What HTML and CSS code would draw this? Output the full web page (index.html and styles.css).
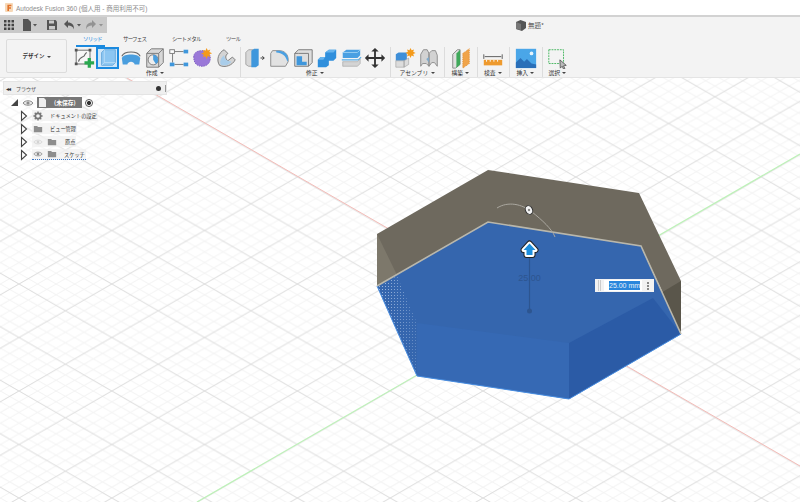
FILE: index.html
```html
<!DOCTYPE html>
<html lang="ja">
<head>
<meta charset="utf-8">
<title>Autodesk Fusion 360</title>
<link rel="stylesheet" href="styles.css">
</head>
<body>
<svg class="defs" width="0" height="0" aria-hidden="true">
  <symbol id="eye" viewBox="0 0 12 12"><path d="M1 6c2-3 8-3 10 0-2 3-8 3-10 0z" fill="#e8e8e8" stroke="#8a8a8a"/><circle cx="6" cy="6" r="1.6" fill="#8a8a8a"/></symbol>
  <symbol id="folder" viewBox="0 0 12 12"><path d="M1 2.5h4l1 1.200h5v6.300H1z" fill="#8d8d8d"/></symbol>
  <symbol id="tri" viewBox="0 0 8 12"><path d="M1.500 1.500L6.500 6l-5 4.500z" fill="#fff" stroke="#444" stroke-width="1.100"/></symbol>
  <symbol id="arrow" viewBox="0 0 20 24"><path d="M10 4L16 11H13V17H7V11H4z"/></symbol>
</svg>

<header class="titlebar">
  <svg class="app-icon" width="8" height="9" viewBox="0 0 10 11"><rect width="10" height="11" rx="1" fill="#f7d9b8"/><path d="M3 2h5v1.800H5v1.400h2.500V7H5v3H3z" fill="#e2722a"/></svg>
  <span class="app-name">Autodesk Fusion 360 (個人用 - 商用利用不可)</span>
</header>

<section class="toolbar">
  <div class="top-row">
    <div class="qat">
      <svg width="12" height="12" viewBox="0 0 12 12"><path d="M1 1h2.500v2.500H1zM4.800 1h2.500v2.500H4.800zM8.500 1H11v2.500H8.500zM1 4.800h2.500v2.500H1zM4.800 4.800h2.500v2.500H4.800zM8.500 4.800H11v2.500H8.500zM1 8.500h2.500V11H1zM4.800 8.500h2.500V11H4.800zM8.500 8.500H11V11H8.500z" fill="#444"/></svg>
      <svg class="qat-file" width="16" height="12" viewBox="0 0 16 12"><path d="M1 0h5l3 3v9H1z" fill="#555"/><path d="M11 5h4l-2 2.500z" fill="#555"/></svg>
      <svg class="qat-save" width="12" height="12" viewBox="0 0 12 12"><path d="M1 1h8.500L11 2.500V11H1z" fill="#555"/><path d="M3 1.500h5v3H3zM3 7h6v3.500H3z" fill="#c9c9c9"/></svg>
      <svg class="qat-undo" width="20" height="12" viewBox="0 0 20 12"><path d="M1 5l4-4v2.500c4 0 6 2 6 7-1-3-3-4-6-4V9z" fill="#555"/><path d="M14 5h4l-2 2.500z" fill="#555"/></svg>
      <svg class="qat-redo" width="20" height="12" viewBox="0 0 20 12"><path d="M11 5L7 1v2.500c-4 0-6 2-6 7 1-3 3-4 6-4V9z" fill="#939393"/><path d="M14 5h4l-2 2.500z" fill="#939393"/></svg>
    </div>
    <div class="doc-title">
      <svg width="11" height="11" viewBox="0 0 11 11"><path d="M5.500 0L11 2v6l-4 3-6-2V2z" fill="#555"/><path d="M1 2l5 2v6L1 9z" fill="#777"/></svg>
      <span>無題*</span>
    </div>
  </div>

  <div class="ribbon">
    <button class="design-btn">デザイン <i class="caret"></i></button>
    <div class="tools">
      <div class="tabs">
        <span class="tab tab-active">ソリッド</span>
        <span class="tab tab-surface">サーフェス</span>
        <span class="tab tab-sheet">シート メタル</span>
        <span class="tab tab-tool">ツール</span>
      </div>
      <div class="groups">
        <div class="group group-create">
          <div class="icons">
            <span class="tool"><svg width="24" height="24" viewBox="0 0 24 24"><rect x="3.500" y="3.500" width="15" height="15" fill="#f7f7f7" stroke="#666"/><path d="M2 2h3v3H2zM17 2h3v3h-3zM2 17h3v3H2z" fill="#555"/><path d="M6 16c1-5 5-5 6-6 1-1 1-3 3-4" fill="none" stroke="#666" stroke-width="1.200"/><path d="M16 12h3.500v3.500H23V19h-3.500v3.500H16V19h-3.500v-3.500H16z" fill="#2aa84f"/></svg></span>
            <span class="tool tool-on"><svg width="24" height="24" viewBox="0 0 24 24"><path d="M5 6l3-3h12v14l-3 3H5z" fill="#8cc6f2" stroke="#5aa0d8" stroke-width=".8"/><path d="M8 3v14h12M8 17l-3 3" fill="none" stroke="#c4e2f8" stroke-width=".8"/></svg></span>
            <span class="tool"><svg width="24" height="24" viewBox="0 0 24 24"><path d="M2 12c2-5 18-5 20 0l-1 7h-5c-1-4-7-4-8 0H3z" fill="#4a9ede"/><path d="M2 10c3-6 17-6 20 0" fill="none" stroke="#666" stroke-width="1.200"/></svg></span>
            <span class="tool"><svg width="24" height="24" viewBox="0 0 24 24"><path d="M3 7l5-5h13v15l-5 5H3z" fill="#d8d8d8" stroke="#777"/><path d="M3 7h13v15M16 7l5-5" fill="none" stroke="#777"/><circle cx="10" cy="14" r="5.500" fill="#eee" stroke="#777"/><path d="M10 14V8.500a5.500 5.500 0 0 1 3 10z" fill="#4a9ede"/></svg></span>
            <span class="tool"><svg width="24" height="24" viewBox="0 0 24 24"><path d="M7 5h10M7 19h10M5 7v10" stroke="#777" fill="none"/><rect x="2" y="3" width="5" height="4" fill="#fff" stroke="#777"/><rect x="17" y="3" width="5" height="4" fill="#3f97dc"/><rect x="2" y="17" width="5" height="4" fill="#3f97dc"/><rect x="17" y="17" width="5" height="4" fill="#3f97dc"/></svg></span>
            <span class="tool"><svg width="24" height="24" viewBox="0 0 24 24"><path d="M3 11c0-5 4-7 9-7 5 0 9 3 9 8 0 6-4 9-9 9-6 0-9-4-9-10z" fill="#9a78d8" stroke="#7a5cc0" stroke-dasharray="1.500 1"/><path d="M17 1l1.300 2.800 2.700-1-1 2.800 3 1.200-3 1.200 1 2.800-2.700-1L17 13l-1.300-2.800-2.700 1 1-2.800-3-1.200 3-1.200-1-2.800 2.700 1z" fill="#f49a1a"/></svg></span>
            <span class="tool"><svg width="24" height="24" viewBox="0 0 24 24"><path d="M5 20C1 14 4 6 10 3l4 4c-3 2-3 6 0 8l5-4 3 3c-3 6-11 9-17 6z" fill="#d4d4d4" stroke="#777"/><path d="M6 19c4 2 9 1 12-3l-4-1c-3-1-4-4-4-6-3 2-5 6-4 10z" fill="#a9cdea"/></svg></span>
          </div>
          <span class="group-label">作成 <i class="caret"></i></span>
        </div>
        <div class="group">
          <div class="icons">
            <span class="tool"><svg width="24" height="24" viewBox="0 0 24 24"><path d="M2 6l3-3h5v18H5l-3-2z" fill="#d8d8d8" stroke="#888" stroke-width=".7"/><path d="M8 4l3-2h5v18l-3 2H8z" fill="#3f97dc"/><path d="M18 12h4m-2-2l2 2-2 2" stroke="#333" fill="none"/></svg></span>
            <span class="tool"><svg width="24" height="24" viewBox="0 0 24 24"><path d="M3 21V7l2-3h7c6 0 10 4 10 10v2l-3 5z" fill="#e2e2e2" stroke="#888"/><path d="M9 4h3c6 0 10 4 10 10l-1 2c-1-6-6-10-12-10z" fill="#4aa0e2"/></svg></span>
            <span class="tool"><svg width="24" height="24" viewBox="0 0 24 24"><path d="M3 7l4-4h15v14l-4 4H3z" fill="#dedede" stroke="#777"/><path d="M7 7h11v14M3 7h4" fill="none" stroke="#777"/><path d="M5 10h6v6h5v4H5z" fill="#3f97dc"/></svg></span>
            <span class="tool"><svg width="24" height="24" viewBox="0 0 24 24"><path d="M2 14l3-3h5V6l4-3h8v9l-3 3h-5v5l-3 2H2z" fill="#2f8fdc"/><path d="M10 6l4-3h8l-3 3zM2 14l3-3h5l-2 3z" fill="#66b4ee"/></svg></span>
            <span class="tool"><svg width="24" height="24" viewBox="0 0 24 24"><path d="M3 6l4-3h15v6l-3 3H3z" fill="#4aa0e2"/><path d="M3 6h16l3-3" fill="none" stroke="#9bd0f4"/><path d="M2 14h18l3-3" fill="none" stroke="#5aaee8" stroke-width="1.200"/><path d="M3 16h16l3-3v5l-3 3H3z" fill="#d4d4d4" stroke="#999" stroke-width=".6"/></svg></span>
            <span class="tool"><svg width="24" height="24" viewBox="0 0 24 24"><path d="M12 1l4 4h-3v6h6V8l4 4-4 4v-3h-6v6h3l-4 4-4-4h3v-6H5v3l-4-4 4-4v3h6V5H8z" fill="#333"/></svg></span>
          </div>
          <span class="group-label">修正 <i class="caret"></i></span>
        </div>
        <div class="group">
          <div class="icons">
            <span class="tool"><svg width="24" height="24" viewBox="0 0 24 24"><path d="M2 8l3-2h9v9H2z" fill="#3f8fd8"/><path d="M2 15h9v7H2zM11 15l5-3v7l-5 3z" fill="#dcdcdc" stroke="#999" stroke-width=".6"/><path d="M18 1l1.200 2.600 2.600-.9-.9 2.600 2.600 1.200-2.600 1.200.9 2.600-2.600-.9L18 12l-1.200-2.600-2.600.9.900-2.600L12.500 6.500l2.600-1.200-.9-2.600 2.600.9z" fill="#f49a1a"/></svg></span>
            <span class="tool"><svg width="24" height="24" viewBox="0 0 24 24"><path d="M3 8l3-5h4l2 4v14l-3-3H5l-2 3zM12 7l3-3h4l2 5v12l-3-4h-3l-3 4z" fill="#d2d2d2" stroke="#8a8a8a"/><path d="M9 13l3-2v6z" fill="#7fa8c8"/></svg></span>
          </div>
          <span class="group-label">アセンブリ <i class="caret"></i></span>
        </div>
        <div class="group group-wide">
          <div class="icons">
            <span class="tool"><svg width="24" height="24" viewBox="0 0 24 24"><path d="M3 8l5-5h3v16l-5 4H3z" fill="#e0e0e0" stroke="#888"/><path d="M7 7l4-4v16l-4 4z" fill="#3fa85a"/><path d="M14 7l7-5v16l-7 5z" fill="#f0a44a" stroke="#e08a2c" stroke-dasharray="1 1"/></svg></span>
          </div>
          <span class="group-label">構築 <i class="caret"></i></span>
        </div>
        <div class="group group-narrow">
          <div class="icons">
            <span class="tool"><svg width="24" height="24" viewBox="0 0 24 24"><path d="M2 8v5M22 8v5M3 10.500h18" stroke="#555" fill="none"/><rect x="2" y="14" width="20" height="6" fill="#ee9a2e"/><path d="M5 14v2M9 14v2M13 14v2M17 14v2" stroke="#fff"/></svg></span>
          </div>
          <span class="group-label">検査 <i class="caret"></i></span>
        </div>
        <div class="group group-wide">
          <div class="icons">
            <span class="tool"><svg width="24" height="24" viewBox="0 0 24 24"><rect x="1" y="2" width="22" height="21" fill="#4aa6e8"/><circle cx="18" cy="7" r="2" fill="#e6f4fc"/><path d="M1 23v-6l5-5 4 4 3-3 5 5 5 1v4z" fill="#2a6fb8"/></svg></span>
          </div>
          <span class="group-label">挿入 <i class="caret"></i></span>
        </div>
        <div class="group group-last">
          <div class="icons">
            <span class="tool"><svg width="24" height="24" viewBox="0 0 24 24"><rect x="2" y="3" width="16" height="15" fill="none" stroke="#3fb45a" stroke-dasharray="2 1"/><path d="M14 14l7 6-3 .5 1.500 3-1.500.5-1.500-3-2 2z" fill="#bbb" stroke="#444" stroke-width=".8"/></svg></span>
          </div>
          <span class="group-label">選択 <i class="caret"></i></span>
        </div>
      </div>
    </div>
  </div>
</section>

<main class="viewport">
  <svg class="scene" viewBox="0 78 800 424" width="800" height="424">
    <defs>
      <pattern id="grid" patternUnits="userSpaceOnUse" x="19" y="391" width="92.8" height="53.5">
        <path d="M0 10.700L92.800 64.200M0 21.400L92.800 74.900M0 32.100L92.800 85.600M0 42.800L92.800 96.300M0 -42.800L92.800 10.700M0 -32.100L92.800 21.400M0 -21.400L92.800 32.100M0 -10.700L92.800 42.800M0 10.700L92.800 -42.800M0 21.400L92.800 -32.100M0 32.100L92.800 -21.400M0 42.800L92.800 -10.700M0 64.200L92.800 10.700M0 74.900L92.800 21.400M0 85.600L92.800 32.100M0 96.300L92.800 42.800" stroke="#f4f4f4" fill="none"/>
        <path d="M0 0L92.800 53.500M0 53.500L92.800 0" stroke="#dcdcdc" fill="none"/>
      </pattern>
      <pattern id="dots" patternUnits="userSpaceOnUse" width="3" height="3">
        <rect x="1" y="1" width="1" height="1" fill="#a9c1e4"/>
      </pattern>
      <linearGradient id="dotfade" x1="0" x2="1" y1="0" y2="0">
        <stop offset="0" stop-color="#fff"/>
        <stop offset="1" stop-color="#555"/>
      </linearGradient>
      <mask id="dotmask" maskUnits="userSpaceOnUse" x="370" y="270" width="60" height="110">
        <rect x="377" y="270" width="40" height="110" fill="url(#dotfade)"/>
      </mask>
    </defs>
    <rect x="0" y="78" width="800" height="424" fill="url(#grid)"/>
    <path d="M127 78L800 466" stroke="#f4bcb8" fill="none"/>
    <path d="M197 502L800 154" stroke="#bdf2b8" stroke-width="1.200" fill="none"/>

    <path d="M377 234L488 170L639 193L681 281V332L641 246L488 222L377 286z" fill="#6e695e"/>
    <path d="M377 234L397 275L377 286z" fill="#7d786b"/>
    <path d="M681 281V332L654 297z" fill="#5a564b"/>

    <path d="M377 286L488 222L641 246L681 334L569 399L417 376z" fill="#3566ae"/>
    <path d="M417 323L569 343V399L417 376z" fill="#3669b4"/>
    <path d="M569 343L653 298L681 334L569 399z" fill="#2b5ba6"/>
    <path d="M378 287L397 276L417 323V376z" fill="url(#dots)" mask="url(#dotmask)"/>
    <path d="M417 376L569 399L681 334" stroke="#4a8ee0" fill="none"/>
    <path d="M377 286L417 376" stroke="#4a8ee0" fill="none"/>
    <path d="M377 286L488 222L641 246L681 334" stroke="#b9b7ac" stroke-width="1.600" fill="none"/>

    <path d="M497 208C508 201 522 204 532 212S552 229 555 237" stroke="#aaa79f" fill="none"/>
    <ellipse cx="529" cy="210" rx="3.500" ry="4.500" fill="#f4f4f4" stroke="#333" transform="rotate(-25 529 210)"/>
    <circle cx="529" cy="210" r="1.200" fill="#888"/>

    <path d="M529.500 258V311" stroke="#2d5590" stroke-width="1.200"/>
    <circle cx="529.500" cy="311" r="2.500" fill="#2d5590"/>
    <text class="dim-text" x="529.500" y="281">25.00</text>
    <path d="M529.500 243.500L535.500 250H532.500V255H526.500V250H523.500z" fill="#222" stroke="#222" stroke-width="6" stroke-linejoin="round"/>
    <path d="M529.500 243.500L535.500 250H532.500V255H526.500V250H523.500z" fill="#fff" stroke="#fff" stroke-width="4" stroke-linejoin="round"/>
    <path d="M529.500 243.500L535.500 250H532.500V255H526.500V250H523.500z" fill="#1e8edc"/>
  </svg>

  <div class="dim-input">
    <span class="grip"></span>
    <span class="dim-field"><span class="dim-value">25.00 mm</span></span>
    <span class="kebab"></span>
  </div>

  <aside class="browser">
    <div class="browser-head">
      <span class="chev">◂◂</span>
      <span class="browser-title">ブラウザ</span>
      <span class="pin"></span>
      <span class="handle"></span>
    </div>
    <ul class="tree">
      <li class="row row-root">
        <svg class="tri-root" width="9" height="9" viewBox="0 0 9 9"><path d="M8 1v7H1z" fill="#444"/></svg>
        <svg class="ic-eye" width="12" height="12"><use href="#eye"/></svg>
        <span class="doc-chip"><svg width="9" height="11" viewBox="0 0 9 11"><path d="M1 1h5l2 2v7H1z" fill="#eee"/></svg><b>(未保存)</b></span>
        <span class="radio"></span>
      </li>
      <li class="row">
        <svg class="tri" width="8" height="12"><use href="#tri"/></svg>
        <span class="chip">
          <svg class="ic" width="10" height="10" viewBox="0 0 12 12"><circle cx="6" cy="6" r="3.200" fill="none" stroke="#777" stroke-width="2"/><path d="M6 .5v2M6 9.500v2M.5 6h2M9.500 6h2M2.100 2.100l1.400 1.400M8.500 8.500l1.400 1.400M2.100 9.900l1.400-1.400M8.500 3.500l1.400-1.400" stroke="#777" stroke-width="1.600"/></svg>
          <span class="label">ドキュメントの設定</span>
        </span>
      </li>
      <li class="row">
        <svg class="tri" width="8" height="12"><use href="#tri"/></svg>
        <span class="chip">
          <svg class="ic" width="10" height="10"><use href="#folder"/></svg>
          <span class="label">ビュー管理</span>
        </span>
      </li>
      <li class="row">
        <svg class="tri" width="8" height="12"><use href="#tri"/></svg>
        <span class="chip">
          <svg class="ic ic-off" width="10" height="10"><use href="#eye"/></svg>
          <svg class="ic ic-folder2" width="10" height="10"><use href="#folder"/></svg>
          <span class="label label-origin">原点</span>
        </span>
      </li>
      <li class="row">
        <svg class="tri" width="8" height="12"><use href="#tri"/></svg>
        <span class="chip chip-sketch">
          <svg class="ic" width="10" height="10"><use href="#eye"/></svg>
          <svg class="ic ic-folder2" width="10" height="10"><use href="#folder"/></svg>
          <span class="label">スケッチ</span>
        </span>
      </li>
    </ul>
  </aside>
</main>
</body>
</html>
```

FILE: styles.css
```css
* { box-sizing: border-box; }
html, body { margin: 0; padding: 0; }
body {
  width: 800px;
  height: 502px;
  overflow: hidden;
  background: #fff;
  font-family: "Noto Sans CJK JP", "Noto Sans", sans-serif;
  display: flex;
  flex-direction: column;
}
.defs { position: absolute; }

.titlebar {
  height: 15px;
  display: flex;
  align-items: center;
  gap: 3px;
  padding-left: 5px;
  background: #fff;
  flex: none;
}
.app-name { font-size: 6.5px; color: #8c8c8c; white-space: nowrap; font-family: "Liberation Sans", "Noto Sans CJK JP", sans-serif; }

.toolbar {
  height: 63px;
  flex: none;
  background: #f3f3f3;
  border-top: 2px solid #d2d2d2;
  border-bottom: 1px solid #e4e4e4;
  display: flex;
  flex-direction: column;
}
.top-row { height: 16px; display: flex; flex: none; }
.qat {
  width: 107px;
  background: #c9c9c9;
  display: flex;
  align-items: center;
  padding-left: 3px;
}
.qat-file { margin-left: 7px; }
.qat-save { margin-left: 8px; }
.qat-undo { margin-left: 5px; }
.qat-redo { margin-left: 2px; }
.doc-title {
  margin-left: 408px;
  display: flex;
  align-items: center;
  gap: 2px;
  font-size: 6.5px;
  color: #555;
}

.ribbon { display: flex; flex: 1; min-height: 0; }
.design-btn {
  width: 61px;
  height: 34px;
  margin: 6px 6px 0 6px;
  background: #f3f3f3;
  border: 1px solid #dcdcdc;
  border-radius: 2px;
  font: 700 5.5px "Noto Sans CJK JP", sans-serif;
  color: #333;
  padding: 0;
  flex: none;
}
.caret {
  display: inline-block;
  width: 0;
  height: 0;
  border-left: 2px solid transparent;
  border-right: 2px solid transparent;
  border-top: 2.5px solid #444;
  vertical-align: middle;
  margin-left: 1px;
}

.tools { display: flex; flex-direction: column; flex: 1; }
.tabs { height: 14px; display: flex; align-items: flex-start; padding-top: 1px; flex: none; font-size: 5.5px; color: #444; }
.tab { white-space: nowrap; line-height: 10px; letter-spacing: -.8px; flex: none; }
.tab-active { color: #1b8adf; margin-left: 10px; width: 15px; }
.tab-active::after { content: ""; display: block; width: 29px; height: 2px; background: #1b8adf; margin: 1px 0 0 -7px; }
.tab-surface { margin-left: 25px; width: 22px; }
.tab-sheet { margin-left: 27px; width: 29px; }
.tab-tool { margin-left: 25px; }

.groups { display: flex; flex: 1; }
.group {
  display: flex;
  flex-direction: column;
  align-items: center;
  padding: 0 3px 0 2px;
  height: 30px;
  border-right: 1px solid #dcdcdc;
}
.group-create { padding-left: 0; width: 168px; }
.group-wide { width: 33px; }
.group-narrow { width: 32px; }
.group-last { border-right: 0; width: 30px; }
.icons { display: flex; height: 22px; }
.tool {
  width: 24px;
  height: 22px;
  display: flex;
  align-items: center;
  justify-content: center;
  flex: none;
}
.group-create .tool { width: 23.7px; }
.tool-on { background: #cfe6f8; outline: 2px solid #1b8adf; outline-offset: -2px; }
.tool svg { display: block; flex: none; transform: scale(.92); }
.group-label { font-size: 5.8px; line-height: 7px; color: #333; white-space: nowrap; }

.viewport { position: relative; flex: 1; overflow: hidden; background: #fff; }
.scene { position: absolute; left: 0; top: 0; display: block; }
.dim-text { font: 9px "Liberation Sans", sans-serif; fill: #2d5590; text-anchor: middle; }

.dim-input {
  position: absolute;
  left: 595px;
  top: 201px;
  width: 59px;
  height: 13px;
  background: #f2f2f2;
  display: flex;
  align-items: center;
  padding: 0 3px;
}
.grip { width: 3px; height: 11px; border-left: 1px solid #ccc; border-right: 1px solid #ccc; }
.dim-field {
  margin-left: 3px;
  width: 38px;
  height: 11px;
  background: #fff;
  display: flex;
  align-items: center;
  padding-left: 5px;
  flex: none;
}
.dim-value { background: #2a86dc; color: #e8f2fb; font: 7px/9px "Liberation Sans", sans-serif; white-space: nowrap; }
.kebab {
  margin-left: 5px;
  width: 2px;
  height: 8px;
  background: repeating-linear-gradient(#888 0 2px, transparent 2px 3px);
}

.browser { position: absolute; left: 3px; top: 3px; width: 164px; }
.browser-head {
  height: 14px;
  background: #efefef;
  border: 1px solid #e4e4e4;
  display: flex;
  align-items: center;
  padding: 0 0 0 2px;
  font-size: 5px;
  color: #444;
}
.chev { font-size: 6px; width: 10px; color: #333; letter-spacing: -1px; }
.browser-title { flex: 1; }
.pin { width: 5px; height: 5px; background: #333; border-radius: 50%; margin-right: 4px; }
.handle { width: 1px; height: 7px; background: #999; }
.tree { list-style: none; margin: 1px 0 0; padding: 0; }
.row { height: 13px; display: flex; align-items: center; font-size: 5.2px; color: #333; padding-left: 17px; }
.row-root { padding-left: 7px; gap: 3px; }
.tri { margin-right: 4px; flex: none; }
.tri-root { flex: none; }
.ic { flex: none; }
.ic-folder2 { margin-left: 2px; }
.ic-off { opacity: .3; }
.chip { display: flex; align-items: center; height: 11px; gap: 2px; background: rgba(240,240,240,.75); padding: 0 1px; }
.chip .label { margin-left: 5px; white-space: nowrap; }
.chip .label-origin { margin-left: 6px; }
.chip-sketch { border-bottom: 1px dotted #3d78c8; }
.doc-chip {
  width: 45px;
  height: 11px;
  background: #777;
  display: flex;
  align-items: center;
  padding-left: 1px;
  color: #fff;
  gap: 7px;
  flex: none;
}
.doc-chip b { font-weight: 700; font-size: 5.8px; white-space: nowrap; }
.radio {
  width: 8px;
  height: 8px;
  border: 1px solid #555;
  border-radius: 50%;
  background: radial-gradient(#333 0 2px, #fff 2.2px);
}
```
